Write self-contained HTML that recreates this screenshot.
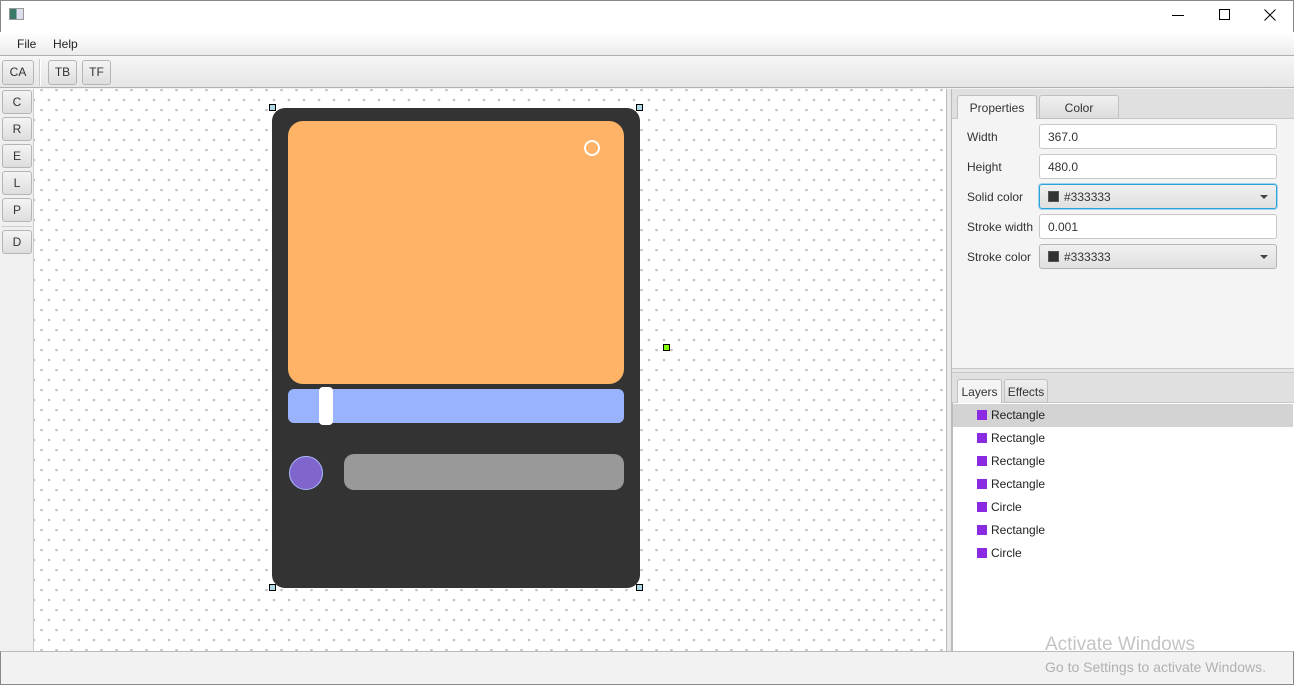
<!DOCTYPE html>
<html><head><meta charset="utf-8"><style>
*{box-sizing:border-box;margin:0;padding:0}
body{width:1294px;height:685px;position:relative;overflow:hidden;background:#f2f2f2;font-family:"Liberation Sans",sans-serif;font-size:12px;color:#333}
.a{position:absolute}
.btn{position:absolute;border:1px solid #b5b5b5;border-radius:3px;background:linear-gradient(#f4f4f4,#dedede);text-align:center;font-size:12px;color:#333}
.lbl{position:absolute;left:967px;font-size:12px;color:#333}
.inp{position:absolute;left:1039px;width:238px;height:25px;background:#fff;border:1px solid #c8c8c8;border-radius:3px;padding:5px 8px;font-size:12px}
.cmb{position:absolute;left:1039px;width:238px;height:25px;background:linear-gradient(#f0f0f0,#e0e0e0);border:1px solid #b5b5b5;border-radius:3px;font-size:12px}
.sw{position:absolute;left:8px;top:6px;width:11px;height:11px;background:#333;border:1px solid #555}
.h{position:absolute;width:7px;height:7px;background:#add8e6;border:1px solid #000}
.row{position:absolute;left:953px;width:340px;height:23px;font-size:12px;color:#222}
.row i{position:absolute;left:24px;top:6px;width:10px;height:10px;background:#8a2be2}
.row span{position:absolute;left:38px;top:4px}
</style></head><body>
<div class="a" style="left:0;top:0;width:1294px;height:32px;background:#fff;border:1px solid #888;border-bottom:none"></div>
<div class="a" style="left:9px;top:8px;width:15px;height:12px;border:1px solid #999;background:linear-gradient(90deg,#3a7a6a 0 50%,#dde 50%)"></div>
<div class="a" style="left:1172px;top:15px;width:12px;height:1px;background:#000"></div>
<div class="a" style="left:1219px;top:9px;width:11px;height:11px;border:1px solid #000"></div>
<svg class="a" style="left:1264px;top:9px" width="12" height="12"><path d="M0.5 0.5L11.5 11.5M11.5 0.5L0.5 11.5" stroke="#000" stroke-width="1"/></svg>
<div class="a" style="left:0;top:32px;width:1294px;height:24px;background:linear-gradient(#fff,#ececec);border-bottom:1px solid #b0b0b0"></div>
<div class="a" style="left:17px;top:37px;font-size:12px;color:#222">File</div>
<div class="a" style="left:53px;top:37px;font-size:12px;color:#222">Help</div>
<div class="a" style="left:0;top:56px;width:1294px;height:32px;background:linear-gradient(#f6f6f6,#e6e6e6);border-bottom:1px solid #b0b0b0"></div>
<div class="btn" style="left:2px;top:60px;width:32px;height:25px;line-height:23px">CA</div>
<div class="a" style="left:39px;top:59px;width:2px;height:27px;border-left:1px solid #ccc;border-right:1px solid #fff"></div>
<div class="btn" style="left:48px;top:60px;width:29px;height:25px;line-height:23px">TB</div>
<div class="btn" style="left:82px;top:60px;width:29px;height:25px;line-height:23px">TF</div>
<div class="a" style="left:0;top:89px;width:34px;height:563px;background:#f0f0f0;border-right:1px solid #ccc"></div>
<div class="btn" style="left:2px;top:90px;width:30px;height:24px;line-height:22px">C</div>
<div class="btn" style="left:2px;top:117px;width:30px;height:24px;line-height:22px">R</div>
<div class="btn" style="left:2px;top:144px;width:30px;height:24px;line-height:22px">E</div>
<div class="btn" style="left:2px;top:171px;width:30px;height:24px;line-height:22px">L</div>
<div class="btn" style="left:2px;top:198px;width:30px;height:24px;line-height:22px">P</div>
<div class="a" style="left:2px;top:226px;width:30px;height:1px;background:#ccc"></div>
<div class="btn" style="left:2px;top:230px;width:30px;height:24px;line-height:22px">D</div>
<svg class="a" style="left:34px;top:89px" width="912" height="563">
<defs><pattern id="p" x="0" y="0" width="15" height="20" patternUnits="userSpaceOnUse">
<circle cx="0" cy="11" r="1.3" fill="#c0c0c0"/><circle cx="15" cy="11" r="1.3" fill="#c0c0c0"/><circle cx="7.5" cy="1" r="1.3" fill="#c0c0c0"/></pattern></defs>
<rect width="912" height="563" fill="#fff"/><rect width="912" height="563" fill="url(#p)"/></svg>
<div class="a" style="left:946px;top:89px;width:6px;height:563px;background:#e8e8e8;border-left:1px solid #bbb;border-right:1px solid #bbb"></div>
<div class="a" style="left:272px;top:108px;width:368px;height:480px;background:#333;border-radius:13px"></div>
<div class="a" style="left:288px;top:121px;width:336px;height:263px;background:#ffb366;border-radius:15px"></div>
<div class="a" style="left:584px;top:140px;width:16px;height:16px;border:2px solid #fff;border-radius:50%"></div>
<div class="a" style="left:288px;top:389px;width:336px;height:34px;background:#99b3ff;border-radius:6px"></div>
<div class="a" style="left:319px;top:387px;width:14px;height:38px;background:#fff;border-radius:4px"></div>
<div class="a" style="left:289px;top:456px;width:34px;height:34px;background:#8066cc;border:1px solid #aab8ff;border-radius:50%"></div>
<div class="a" style="left:344px;top:454px;width:280px;height:36px;background:#999;border-radius:10px"></div>
<div class="h" style="left:269px;top:104px"></div>
<div class="h" style="left:636px;top:104px"></div>
<div class="h" style="left:269px;top:584px"></div>
<div class="h" style="left:636px;top:584px"></div>
<div class="h" style="left:663px;top:344px;background:#7fff00"></div>
<div class="a" style="left:952px;top:89px;width:342px;height:30px;background:#e0e0e0;border-bottom:1px solid #c8c8c8"></div>
<div class="a" style="left:957px;top:95px;width:80px;height:25px;background:#f4f4f4;border:1px solid #c0c0c0;border-bottom:none;border-radius:3px 3px 0 0;text-align:center;line-height:24px">Properties</div>
<div class="a" style="left:1039px;top:95px;width:80px;height:24px;background:linear-gradient(#f0f0f0,#dcdcdc);border:1px solid #c0c0c0;border-radius:3px 3px 0 0;text-align:center;line-height:24px">Color</div>
<div class="a" style="left:952px;top:119px;width:342px;height:249px;background:#f4f4f4"></div>
<div class="lbl" style="top:130px">Width</div><div class="inp" style="top:124px">367.0</div>
<div class="lbl" style="top:160px">Height</div><div class="inp" style="top:154px">480.0</div>
<div class="lbl" style="top:190px">Solid color</div>
<div class="cmb" style="top:184px;border:1px solid #2ba3d8;box-shadow:0 0 0 1px #9fd3ee"><div class="sw"></div><span class="a" style="left:24px;top:5px">#333333</span><span class="a" style="right:8px;top:10px;border:4px solid transparent;border-top:4px solid #444"></span></div>
<div class="lbl" style="top:220px">Stroke width</div><div class="inp" style="top:214px">0.001</div>
<div class="lbl" style="top:250px">Stroke color</div>
<div class="cmb" style="top:244px"><div class="sw"></div><span class="a" style="left:24px;top:5px">#333333</span><span class="a" style="right:8px;top:10px;border:4px solid transparent;border-top:4px solid #444"></span></div>
<div class="a" style="left:952px;top:368px;width:342px;height:5px;background:#e6e6e6;border-top:1px solid #c8c8c8;border-bottom:1px solid #c8c8c8"></div>
<div class="a" style="left:952px;top:373px;width:342px;height:30px;background:#e0e0e0;border-bottom:1px solid #c8c8c8"></div>
<div class="a" style="left:957px;top:379px;width:45px;height:25px;background:#f4f4f4;border:1px solid #c0c0c0;border-bottom:none;border-radius:3px 3px 0 0;text-align:center;line-height:24px">Layers</div>
<div class="a" style="left:1004px;top:379px;width:44px;height:24px;background:linear-gradient(#f0f0f0,#dcdcdc);border:1px solid #c0c0c0;border-radius:3px 3px 0 0;text-align:center;line-height:24px">Effects</div>
<div class="a" style="left:952px;top:403px;width:342px;height:249px;background:#fff;border-left:1px solid #bbb"></div>
<div class="row" style="top:404px;background:#d3d3d3"><i></i><span>Rectangle</span></div>
<div class="row" style="top:427px"><i></i><span>Rectangle</span></div>
<div class="row" style="top:450px"><i></i><span>Rectangle</span></div>
<div class="row" style="top:473px"><i></i><span>Rectangle</span></div>
<div class="row" style="top:496px"><i></i><span>Circle</span></div>
<div class="row" style="top:519px"><i></i><span>Rectangle</span></div>
<div class="row" style="top:542px"><i></i><span>Circle</span></div>
<div class="a" style="left:0;top:651px;width:1294px;height:34px;background:#f2f2f2;border-top:1px solid #bbb;border-left:1px solid #888;border-right:1px solid #888;border-bottom:1px solid #888"></div>
<div class="a" style="left:1045px;top:634px;font-size:19px;color:#c4c4c4">Activate Windows</div>
<div class="a" style="left:1045px;top:659px;font-size:14px;color:#b0b0b0">Go to Settings to activate Windows.</div>
</body></html>
